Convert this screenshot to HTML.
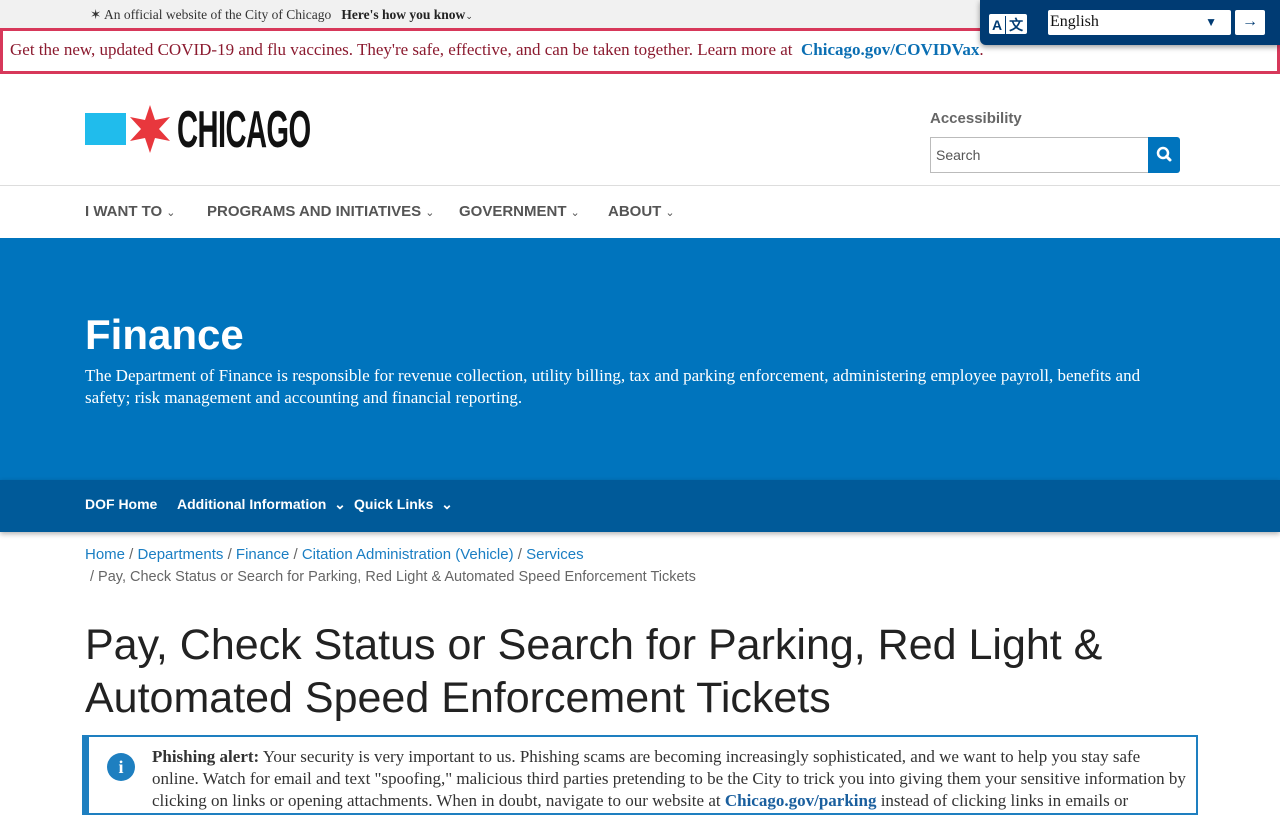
<!DOCTYPE html>
<html><head><meta charset="utf-8"><style>
*{box-sizing:border-box;margin:0;padding:0}
body{width:1280px;height:800px;overflow:hidden;background:#fff;font-family:"Liberation Sans",sans-serif;position:relative}
.serif{font-family:"Liberation Serif",serif}
.top{height:29px;background:#f1f1f1;font-size:13.5px;color:#333;padding:7px 0 0 90px}
.covid{position:absolute;top:28px;left:0;width:1280px;height:46px;border:3px solid #d7385a;padding:9px 0 0 7px;font-size:17px;color:#8b1a2f}
.covid b{color:#0b6fb3}
.trans{position:absolute;left:980px;top:0;width:300px;height:45px;background:#003b73;border-radius:0 0 0 6px;box-shadow:0 2px 6px rgba(0,0,0,.4)}
.nav{position:absolute;top:185px;left:0;width:1280px;height:53px;border-top:1px solid #ddd;font-weight:bold;font-size:15px;color:#555}
.nav span{position:absolute;top:17px}
.nav i{font-style:normal;font-size:11px;font-weight:normal;margin-left:4px}
.hero{position:absolute;top:238px;left:0;width:1280px;height:242px;background:#0074bd;color:#fff}
.sub{position:absolute;top:480px;left:0;width:1280px;height:52px;background:#005a99;color:#fff;font-weight:bold;font-size:14px;box-shadow:0 2px 5px rgba(0,0,0,.3)}
.sub span{position:absolute;top:16px}
.crumb{position:absolute;left:85px;font-size:15px;color:#666}
.crumb a{color:#1a7ec3;text-decoration:none}
h1{position:absolute;top:619px;left:85px;font-size:43px;font-weight:normal;line-height:53px;color:#222;width:1120px}
.alert{position:absolute;top:735px;left:82px;width:1116px;height:80px;border:2px solid #1e7fc0;border-left:7px solid #1e7fc0;padding:9px 10px 0 63px;font-size:17px;line-height:22px;color:#333}
</style></head><body>
<div class="top serif">✶ An official website of the City of Chicago &nbsp; <b style="color:#222">Here's how you know</b><span style="font-size:9px">⌄</span></div>
<div class="covid serif">Get the new, updated COVID-19 and flu vaccines. They're safe, effective, and can be taken together. Learn more at &nbsp;<b>Chicago.gov/COVIDVax</b>.</div>
<div class="trans">
 <div style="position:absolute;left:9px;top:14px;width:38px;height:20px;background:#fff;border-radius:2px;font-size:14px;font-weight:bold;color:#003b73;padding:1px 0 0 3px">A<span style="display:inline-block;width:1px;height:18px;background:#003b73;margin:0 3px;vertical-align:-4px"></span>文</div>
 <div style="position:absolute;left:68px;top:10px;width:183px;height:25px;background:#fff;border-radius:2px;font-family:'Liberation Serif',serif;font-size:16px;color:#111;padding:3px 0 0 2px">English<span style="position:absolute;right:14px;top:5px;font-size:12px;color:#003b73">▼</span></div>
 <div style="position:absolute;left:255px;top:10px;width:30px;height:25px;background:#fff;border-radius:2px;color:#003b73;font-weight:bold;font-size:16px;text-align:center;line-height:24px">→</div>
</div>
<div style="position:absolute;left:85px;top:113px;width:41px;height:32px;background:#20bcec"></div>
<svg style="position:absolute;left:129px;top:105px" width="42" height="48" viewBox="-21 -24 42 48"><polygon fill="#e8373d" points="0,-24 5,-9 20,-12 9,0 20,12 5,9 0,24 -5,9 -20,12 -9,0 -20,-12 -5,-9"/></svg>
<div style="position:absolute;left:177px;top:100px;font-size:52px;font-weight:bold;color:#111;transform:scaleX(.56);transform-origin:left;letter-spacing:-1px">CHICAGO</div>
<div style="position:absolute;left:930px;top:110px;font-size:15px;font-weight:bold;color:#666">Accessibility</div>
<div style="position:absolute;left:930px;top:137px;width:220px;height:36px;border:1px solid #bbb;font-size:14px;color:#555;padding:9px 0 0 5px">Search</div>
<div style="position:absolute;left:1148px;top:137px;width:32px;height:36px;background:#0074bd;border-radius:0 3px 3px 0"><svg width="32" height="36" viewBox="0 0 32 36"><circle cx="15" cy="16" r="5" fill="none" stroke="#fff" stroke-width="2.5"/><line x1="18.5" y1="19.5" x2="22" y2="23" stroke="#fff" stroke-width="3" stroke-linecap="round"/></svg></div>
<div class="nav"><span style="left:85px">I WANT TO<i>⌄</i></span><span style="left:207px">PROGRAMS AND INITIATIVES<i>⌄</i></span><span style="left:459px">GOVERNMENT<i>⌄</i></span><span style="left:608px">ABOUT<i>⌄</i></span></div>
<div class="hero">
 <div style="position:absolute;left:85px;top:73px;font-size:42px;font-weight:bold">Finance</div>
 <div class="serif" style="position:absolute;left:85px;top:127px;width:1090px;font-size:17px;line-height:22px">The Department of Finance is responsible for revenue collection, utility billing, tax and parking enforcement, administering employee payroll, benefits and safety; risk management and accounting and financial reporting.</div>
</div>
<div class="sub"><span style="left:85px">DOF Home</span><span style="left:177px">Additional Information &nbsp;⌄</span><span style="left:354px">Quick Links &nbsp;⌄</span></div>
<div class="crumb" style="top:546px"><a>Home</a> / <a>Departments</a> / <a>Finance</a> / <a>Citation Administration (Vehicle)</a> / <a>Services</a></div>
<div class="crumb" style="top:569px;left:90px;font-size:14.5px">/ Pay, Check Status or Search for Parking, Red Light &amp; Automated Speed Enforcement Tickets</div>
<h1>Pay, Check Status or Search for Parking, Red Light &amp; Automated Speed Enforcement Tickets</h1>
<div class="alert serif">
 <div style="position:absolute;left:18px;top:16px;width:28px;height:28px;border-radius:50%;background:#1e7fc0;color:#fff;font-weight:bold;font-size:18px;text-align:center;line-height:28px">i</div>
 <b>Phishing alert:</b> Your security is very important to us. Phishing scams are becoming increasingly sophisticated, and we want to help you stay safe online. Watch for email and text "spoofing," malicious third parties pretending to be the City to trick you into giving them your sensitive information by clicking on links or opening attachments. When in doubt, navigate to our website at <b style="color:#1a5f9e">Chicago.gov/parking</b> instead of clicking links in emails or
</div>
</body></html>
